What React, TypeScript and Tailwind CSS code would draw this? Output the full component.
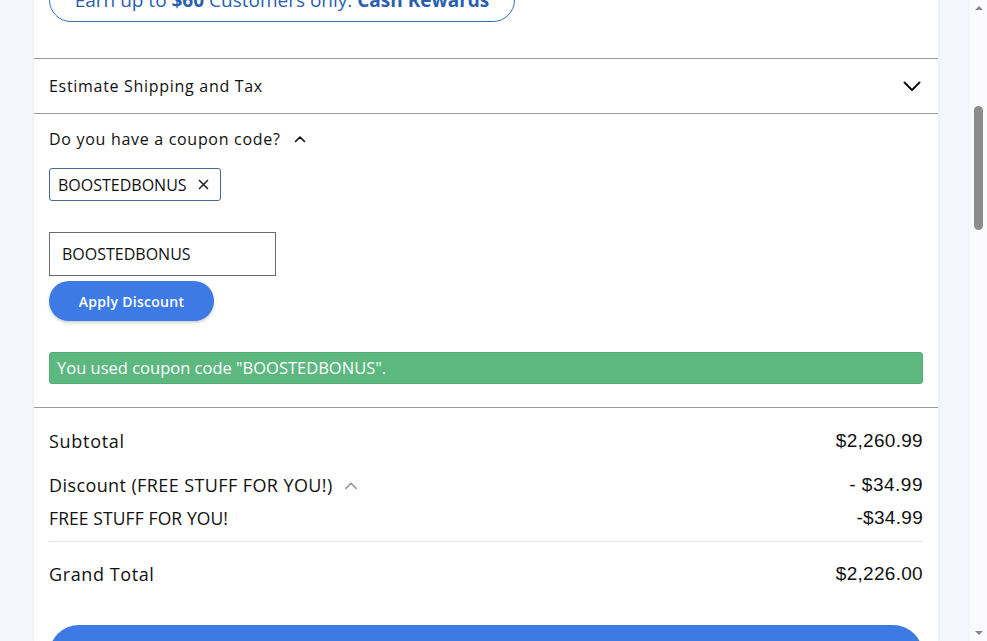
import React from "react";

const font = { fontFamily: '"Open Sans", "Noto Sans", sans-serif' };
const num = { fontFamily: '"Liberation Sans", Arial, sans-serif' };

function ChevronDown() {
  return (
    <svg width="18" height="11" viewBox="0 0 18 11" fill="none">
      <path d="M1.5 1.5 L9 9 L16.5 1.5" stroke="#111" strokeWidth="2" strokeLinecap="round" strokeLinejoin="round" />
    </svg>
  );
}

function ChevronUp({ color = "#111", w = 12, h = 8, sw = 1.6 }: { color?: string; w?: number; h?: number; sw?: number }) {
  return (
    <svg width={w} height={h} viewBox="0 0 12 8" fill="none">
      <path d="M1.5 6.5 L6 2 L10.5 6.5" stroke={color} strokeWidth={sw} strokeLinecap="round" strokeLinejoin="round" />
    </svg>
  );
}

export default function App() {
  return (
    <div className="flex h-[641px] w-[987px] overflow-hidden bg-[#f4f6fd]" style={font}>
      <div className="flex-1 pl-[34px] pr-[32px]">
        <div className="h-full bg-white shadow-[0_0_3px_rgba(0,0,0,0.08)]">
          {/* Top promo */}
          <div className="flex h-[58px] flex-col px-[15px]">
            <div className="mt-[-22px] flex h-[44px] w-[466px] items-center justify-center rounded-full border border-[#3b6fb6] text-[19px] text-[#2a5fb0]">
              <span className="whitespace-nowrap">
                Earn up to <b>$60</b> Customers only: <b>Cash Rewards</b>
              </span>
            </div>
          </div>
          {/* Estimate shipping */}
          <div className="flex h-[56px] items-center justify-between border-y border-[#9a9a9a] px-[15px]">
            <span className="text-[16px] font-medium tracking-[0.7px] text-[#111]">Estimate Shipping and Tax</span>
            <span className="mr-[2px]">
              <ChevronDown />
            </span>
          </div>
          {/* Coupon section */}
          <div className="border-b border-[#9a9a9a] px-[15px] pb-[23px]">
            <div className="flex h-[48px] items-center gap-[13px] pt-[2px]">
              <span className="text-[16px] font-medium tracking-[0.7px] text-[#111]">Do you have a coupon code?</span>
              <ChevronUp />
            </div>
            <div className="mt-[6px] flex h-[33px] w-[172px] items-center gap-[11px] rounded-[3px] border border-[#47689a] pl-[8px] text-[16px] text-[#111]">
              <span>BOOSTEDBONUS</span>
              <svg width="11" height="11" viewBox="0 0 11 11">
                <path d="M1 1 L10 10 M10 1 L1 10" stroke="#222" strokeWidth="1.5" />
              </svg>
            </div>
            <div className="mt-[31px] flex h-[44px] w-[227px] items-center border border-[#6b6b6b] pl-[12px] text-[16px] text-[#111]">
              BOOSTEDBONUS
            </div>
            <button className="mt-[5px] flex h-[40px] w-[165px] items-center justify-center rounded-full bg-[#3d7ae5] text-[14px] font-semibold tracking-[0.3px] text-white shadow-[0_2px_3px_rgba(0,0,0,0.18)]">
              Apply Discount
            </button>
            <div className="mt-[31px] flex h-[32px] items-center rounded-[3px] border border-[#4fae72] bg-[#5cb87f] pl-[7px] text-[16.5px] text-white">
              You used coupon code "BOOSTEDBONUS".
            </div>
          </div>
          {/* Totals */}
          <div className="px-[15px]">
            <div className="flex h-[64px] items-center justify-between pt-[2px]">
              <span className="text-[18px] font-medium tracking-[0.7px] text-[#111]">Subtotal</span>
              <span className="text-[19px] tracking-[0.3px] text-[#111]" style={num}>
                $2,260.99
              </span>
            </div>
            <div className="flex h-[26px] items-center justify-between">
              <span className="flex items-center gap-[11px] text-[18px] tracking-[0.4px] text-[#111]">
                Discount (FREE STUFF FOR YOU!)
                <ChevronUp color="#999" w={14} h={9} sw={1.5} />
              </span>
              <span className="text-[19px] tracking-[0.5px] text-[#111]" style={num}>
                -&nbsp;$34.99
              </span>
            </div>
            <div className="flex h-[44px] items-center justify-between border-b border-[#e6e6e6] pb-[2px]">
              <span className="text-[17.5px] tracking-[0.1px] text-[#111]">FREE STUFF FOR YOU!</span>
              <span className="text-[19px] tracking-[0.3px] text-[#111]" style={num}>
                -$34.99
              </span>
            </div>
            <div className="flex h-[64px] items-center justify-between">
              <span className="text-[18px] font-medium tracking-[0.6px] text-[#111]">Grand Total</span>
              <span className="text-[19px] tracking-[0.3px] text-[#111]" style={num}>
                $2,226.00
              </span>
            </div>
            <div className="mt-[19px] h-[60px] rounded-full bg-[#3d7ae5]" />
          </div>
        </div>
      </div>
      {/* Scrollbar */}
      <div className="flex w-[17px] flex-col items-center bg-[#fbfbfd]">
        <div className="mt-[6px] h-0 w-0 border-x-[4px] border-b-[4px] border-x-transparent border-b-[#888]" />
        <div className="mt-[96px] h-[124px] w-[9px] rounded-full bg-[#8c8c8c]" />
        <div className="flex-1" />
        <div className="mb-[6px] h-0 w-0 border-x-[4px] border-t-[4px] border-x-transparent border-t-[#888]" />
      </div>
    </div>
  );
}
